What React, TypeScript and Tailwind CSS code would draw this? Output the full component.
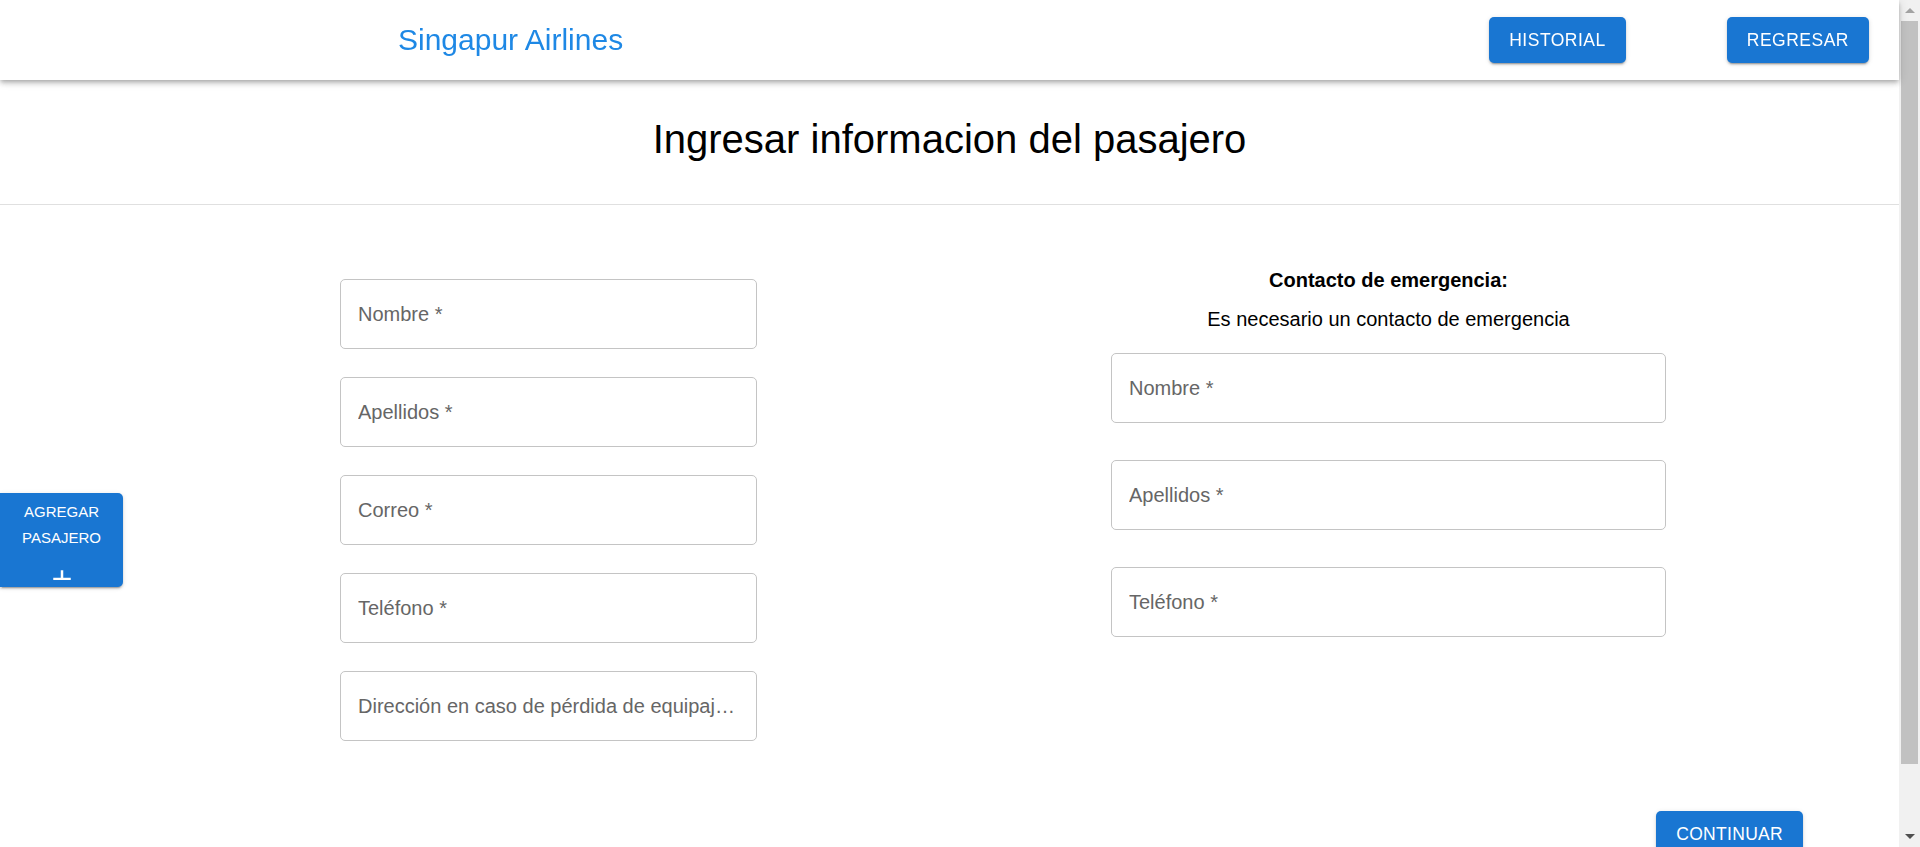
const pasajeroCampos = ['Nombre *', 'Apellidos *', 'Correo *', 'Teléfono *', 'Dirección en caso de pérdida de equipaje *'];
const contactoCampos = ['Nombre *', 'Apellidos *', 'Teléfono *'];

const btnShadow =
  'shadow-[0_3px_1px_-2px_rgba(0,0,0,0.2),0_2px_2px_0_rgba(0,0,0,0.14),0_1px_5px_0_rgba(0,0,0,0.12)]';

function Campo({ label }: { label: string }) {
  return (
    <input
      type="text"
      placeholder={label}
      className="h-[70px] w-full rounded-[5px] border border-[#c4c4c4] bg-white px-[17px] text-[20px] text-[#222] outline-none text-ellipsis placeholder:text-[#666]"
    />
  );
}

function Scrollbar() {
  return (
    <div className="fixed right-0 top-0 flex h-screen w-[21px] flex-col items-center bg-[#f1f1f1]">
      <div className="flex h-[21px] items-center justify-center">
        <div className="h-0 w-0 border-x-[5px] border-b-[5px] border-x-transparent border-b-[#a3a3a3]" />
      </div>
      <div className="h-[743px] w-[17px] bg-[#c1c1c1]" />
      <div className="flex flex-1 items-end justify-center pb-[8px]">
        <div className="h-0 w-0 border-x-[5px] border-t-[5px] border-x-transparent border-t-[#505050]" />
      </div>
    </div>
  );
}

export default function App() {
  return (
    <div className="min-h-screen bg-white font-['Liberation_Sans',Arial,sans-serif] text-black">
      <div className="mr-[21px] pb-[71px]">
        <header className="relative z-10 flex h-[80px] items-center bg-white shadow-[0_2px_4px_-1px_rgba(0,0,0,0.2),0_4px_5px_0_rgba(0,0,0,0.14),0_1px_10px_0_rgba(0,0,0,0.12)]">
          <h1 className="ml-[398px] text-[30px] leading-none text-[#1e88e5]">Singapur Airlines</h1>
          <div className="ml-auto mr-[30px] flex items-center gap-[101px]">
            <button className={`h-[46px] rounded-[5px] bg-[#1976d2] px-[20px] text-[17.5px] uppercase tracking-[0.5px] text-white ${btnShadow}`}>
              Historial
            </button>
            <button className={`h-[46px] rounded-[5px] bg-[#1976d2] px-[20px] text-[17.5px] uppercase tracking-[0.5px] text-white ${btnShadow}`}>
              Regresar
            </button>
          </div>
        </header>

        <div className="border-b border-[#e0e0e0] pt-[35px] pb-[41px] text-center">
          <h2 className="text-[40px] leading-[48px]">Ingresar informacion del pasajero</h2>
        </div>

        <div className="flex items-start">
          <button className={`mt-[288px] flex h-[94px] w-[123px] flex-col items-center overflow-hidden rounded-r-[5px] bg-[#1976d2] pt-[6px] text-[15px] uppercase leading-[26px] text-white ${btnShadow}`}>
            <span>Agregar</span>
            <span>Pasajero</span>
            <span className="mt-[13px] block h-[16px] overflow-hidden">
              <svg viewBox="0 0 24 24" className="h-[30px] w-[30px] fill-current">
                <path d="M19 13h-6v6h-2v-6H5v-2h6V5h2v6h6v2z" />
              </svg>
            </span>
          </button>

          <div className="ml-[217px] mt-[74px] flex w-[417px] flex-col gap-[28px]">
            {pasajeroCampos.map((c) => (
              <Campo key={c} label={c} />
            ))}
          </div>

          <div className="ml-[354px] mt-[61px] flex w-[555px] flex-col">
            <p className="text-center text-[20px] font-bold leading-[28px]">Contacto de emergencia:</p>
            <p className="mt-[11px] text-center text-[20px] leading-[28px]">Es necesario un contacto de emergencia</p>
            <div className="mt-[20px] flex flex-col gap-[37px]">
              {contactoCampos.map((c) => (
                <Campo key={c} label={c} />
              ))}
            </div>
          </div>
        </div>

        <div className="mt-[70px] flex justify-end pr-[96px]">
          <button className={`h-[46px] rounded-[5px] bg-[#1976d2] px-[20px] text-[17.5px] uppercase tracking-[0.3px] text-white ${btnShadow}`}>
            Continuar
          </button>
        </div>
      </div>
      <Scrollbar />
    </div>
  );
}
